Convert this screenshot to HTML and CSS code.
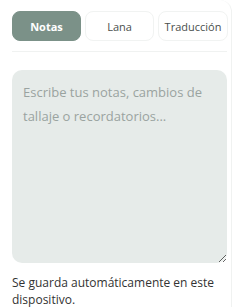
FILE: index.html
```html
<!DOCTYPE html>
<html lang="es">
<head>
<meta charset="utf-8">
<link rel="stylesheet" href="styles.css">
</head>
<body>
<div class="card">
  <div class="tabs">
    <button class="tab active">Notas</button>
    <button class="tab">Lana</button>
    <button class="tab">Traducción</button>
  </div>
  <div class="divider"></div>
  <textarea class="notes" placeholder="Escribe tus notas, cambios de tallaje o recordatorios..."></textarea>
  <p class="hint">Se guarda automáticamente en este dispositivo.</p>
</div>
</body>
</html>
```
FILE: styles.css
```css
html, body {
  margin: 0;
  padding: 0;
  background: #ffffff;
}
body {
  font-family: "Open Sans", "Noto Sans", sans-serif;
  width: 240px;
  height: 307px;
  overflow: hidden;
}
.card {
  box-sizing: border-box;
  width: 232px;
  min-height: 320px;
  padding: 11px 4px 0 12px;
  border-right: 1px solid #f0f2f1;
  border-radius: 0 12px 0 0;
}
.tabs {
  display: grid;
  grid-template-columns: 69px 69px 70px;
  gap: 4px;
}
.tab {
  height: 30px;
  border: 1px solid #f1f3f2;
  background: #ffffff;
  border-radius: 8px;
  font-family: inherit;
  font-size: 11px;
  color: #4a4f4d;
  padding: 0;
}
.tab.active {
  background: #7b9188;
  border-color: #7b9188;
  color: #ffffff;
  font-weight: 700;
}
.divider {
  height: 1px;
  background: #f0f2f1;
  margin-top: 10px;
}
.notes {
  display: block;
  box-sizing: border-box;
  width: 215px;
  height: 193px;
  margin-top: 18px;
  border: none;
  border-radius: 10px;
  background: #e6ebe9;
  padding: 10px 11px;
  font-family: inherit;
  font-size: 13px;
  line-height: 24px;
  color: #333;
  resize: vertical;
  outline: none;
}
.notes::placeholder {
  color: #9aa3a0;
}
.hint {
  margin: 11px 0 0;
  font-size: 12px;
  line-height: 17px;
  color: #333;
}
```
